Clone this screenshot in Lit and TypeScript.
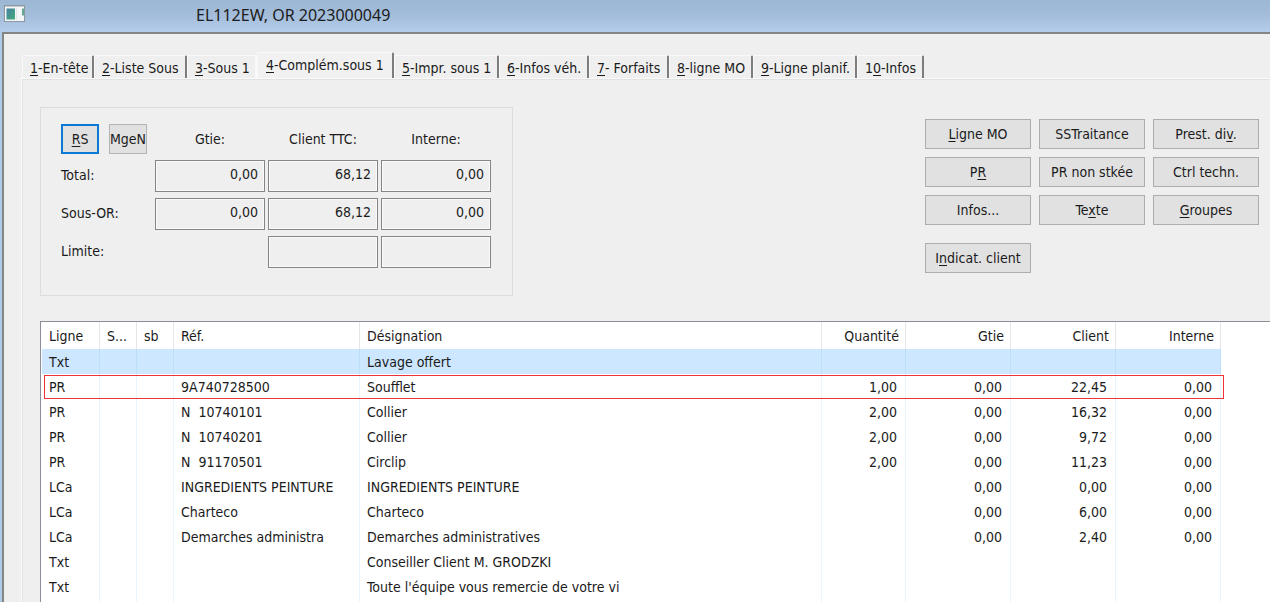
import { LitElement, html, css, nothing } from "lit";
import { customElement, state } from "lit/decorators.js";
import { classMap } from "lit/directives/class-map.js";
import { styleMap } from "lit/directives/style-map.js";

interface Tab {
  text: string;
  key: number;
  width: number;
}

interface Action {
  text: string;
  key?: number;
}

const TABS: Tab[] = [
  { text: "1-En-tête", key: 0, width: 72 },
  { text: "2-Liste Sous", key: 0, width: 93 },
  { text: "3-Sous 1", key: 0, width: 70 },
  { text: "4-Complém.sous 1", key: 0, width: 137 },
  { text: "5-Impr. sous 1", key: 0, width: 105 },
  { text: "6-Infos véh.", key: 0, width: 90 },
  { text: "7- Forfaits", key: 0, width: 80 },
  { text: "8-ligne MO", key: 0, width: 84 },
  { text: "9-Ligne planif.", key: 0, width: 104 },
  { text: "10-Infos", key: 1, width: 67 },
];

const ACTIONS: Action[] = [
  { text: "Ligne MO", key: 0 },
  { text: "SSTraitance" },
  { text: "Prest. div.", key: 9 },
  { text: "PR", key: 1 },
  { text: "PR non stkée" },
  { text: "Ctrl techn." },
  { text: "Infos..." },
  { text: "Texte", key: 2 },
  { text: "Groupes", key: 0 },
];

const AMOUNT_COLUMNS = ["Gtie:", "Client TTC:", "Interne:"];

const TOTALS: { label: string; values: (string | null)[] }[] = [
  { label: "Total:", values: ["0,00", "68,12", "0,00"] },
  { label: "Sous-OR:", values: ["0,00", "68,12", "0,00"] },
  { label: "Limite:", values: [null, "", ""] },
];

const COLUMNS = ["Ligne", "S...", "sb", "Réf.", "Désignation", "Quantité", "Gtie", "Client", "Interne"];

const ROWS: string[][] = [
  ["Txt", "", "", "", "Lavage offert", "", "", "", ""],
  ["PR", "", "", "9A740728500", "Soufflet", "1,00", "0,00", "22,45", "0,00"],
  ["PR", "", "", "N  10740101", "Collier", "2,00", "0,00", "16,32", "0,00"],
  ["PR", "", "", "N  10740201", "Collier", "2,00", "0,00", "9,72", "0,00"],
  ["PR", "", "", "N  91170501", "Circlip", "2,00", "0,00", "11,23", "0,00"],
  ["LCa", "", "", "INGREDIENTS PEINTURE", "INGREDIENTS PEINTURE", "", "0,00", "0,00", "0,00"],
  ["LCa", "", "", "Charteco", "Charteco", "", "0,00", "6,00", "0,00"],
  ["LCa", "", "", "Demarches administra", "Demarches administratives", "", "0,00", "2,40", "0,00"],
  ["Txt", "", "", "", "Conseiller Client M. GRODZKI", "", "", "", ""],
  ["Txt", "", "", "", "Toute l'équipe vous remercie de votre vi", "", "", "", ""],
];

/** Underlines the keyboard accelerator of a caption. */
const caption = (text: string, key?: number) =>
  key === undefined
    ? html`${text}`
    : html`${text.slice(0, key)}<span class="key">${text[key]}</span>${text.slice(key + 1)}`;

@customElement("app-root")
export class AppRoot extends LitElement {
  @state() private activeTab = 3;
  @state() private selectedRow = 0;

  static styles = css`
    :host {
      display: flex;
      flex-direction: column;
      height: 100vh;
      overflow: hidden;
      background: #efefef;
      color: #1b1b1b;
      font: 14px/18px "DejaVu Sans Condensed", "Noto Sans", sans-serif;
    }
    *, *::before, *::after { box-sizing: border-box; }
    button, input { font: inherit; color: inherit; margin: 0; border-radius: 0; }
    .key { text-decoration: underline; text-underline-offset: 2px; text-decoration-thickness: 1px; }

    .titlebar {
      flex: none;
      height: 32px;
      padding: 0 4px;
      display: flex;
      align-items: center;
      gap: 171px;
      background: linear-gradient(#9cb7d3, #a3bddb 50%, #b3cdea);
    }
    .titlebar svg { display: block; flex: none; margin-bottom: 5px; }
    .title { margin: 0; font: 16px/28px "Noto Sans", sans-serif; white-space: nowrap; padding-bottom: 2px; }

    .window {
      flex: 1;
      min-height: 0;
      margin-left: 2px;
      border: solid #858585;
      border-width: 2px 0 0 2px;
      padding: 18px 0 0 17px;
      display: flex;
      flex-direction: column;
      box-shadow: -2px 0 #b0cbe9;
    }
    .tabs { display: flex; align-items: flex-end; padding-left: 1px; height: 26px; flex: none; }
    .tab {
      flex: none;
      height: 23px;
      padding: 2px 0 0 7px;
      border: solid #f9f9f9;
      border-width: 1px 2px 0 1px;
      border-right-color: #7d7d7d;
      border-radius: 2px 2px 0 0;
      background: none;
      text-align: left;
      white-space: nowrap;
      line-height: 20px;
    }
    .tab.before { border-right-color: #f9f9f9; }
    .tab.active { height: 26px; padding: 0 0 2px 8px; background: #f1f1f1; }

    .page {
      flex: 1;
      min-height: 0;
      border: solid #fafafa;
      border-width: 1px 0 0 1px;
      box-shadow: inset 1px 1px #e2e2e2;
      padding: 28px 0 0 18px;
      display: flex;
      flex-direction: column;
      gap: 25px;
    }
    .top { display: flex; justify-content: space-between; align-items: flex-start; padding-right: 11px; }

    .totals {
      display: grid;
      grid-template-columns: 91px repeat(3, 110px);
      grid-template-rows: 30px;
      gap: 6px 3px;
      align-items: center;
      margin: 0;
      border: 1px solid #dcdcdc;
      padding: 16px 21px 27px 20px;
    }
    .totals label { padding-bottom: 3px; }
    .pair { display: flex; gap: 10px; }
    .small {
      flex: none;
      width: 38px;
      height: 30px;
      padding: 0;
      display: flex;
      justify-content: center;
      align-items: center;
      overflow: hidden;
      background: #e1e1e1;
      border: 1px solid #b4b4b4;
    }
    .small.default { border: 2px solid #0b78d6; }
    .head { text-align: center; }
    .amount {
      width: 100%;
      height: 32px;
      padding: 0 6px 5px;
      text-align: right;
      background: #efefef;
      border: 1px solid #858585;
      box-shadow: inset 0 0 0 1px #fafafa;
      outline: none;
    }

    .actions { display: grid; grid-template-columns: repeat(3, 106px); gap: 8px; padding-top: 12px; }
    .action {
      height: 30px;
      padding: 0;
      background: #e1e1e1;
      border: 1px solid #adadad;
      text-align: center;
      white-space: nowrap;
    }
    .action.apart { margin-top: 10px; }

    .list {
      flex: 1;
      min-height: 0;
      overflow: hidden;
      background: #fff;
      border: solid #8b8e96;
      border-width: 1px 0 0 1px;
      padding: 0 49px 0 1px;
    }
    table { width: 100%; table-layout: fixed; border-collapse: separate; border-spacing: 0; }
    .c-line { width: 58px; }
    .c-flag { width: 37px; }
    .c-ref { width: 186px; }
    .c-qty { width: 84px; }
    .c-sum { width: 105px; }
    th, td {
      height: 25px;
      padding: 0 0 0 7px;
      border-right: 1px solid #eaf4fc;
      text-align: left;
      font-weight: 400;
      white-space: pre;
    }
    th { height: 27px; padding-top: 1px; border-right-color: #e6e6e6; }
    th.num { text-align: right; padding-right: 6px; }
    td.num { text-align: right; padding-right: 8px; }
    .selected td { background: #cce7ff; border-right-color: #bcdefa; }
    .marked { position: relative; }
    .marked td:first-child::after {
      content: "";
      position: absolute;
      inset: 1px -3px 0 2px;
      border: 1px solid #ee3338;
      pointer-events: none;
    }
  `;

  private renderTotals() {
    return html`
      <section class="totals" aria-label="Totaux">
        <div class="pair">
          <button class="small default"><span>${caption("RS", 0)}</span></button>
          <button class="small"><span>MgeN</span></button>
        </div>
        ${AMOUNT_COLUMNS.map((name) => html`<span class="head">${name}</span>`)}
        ${TOTALS.map(
          (row, r) => html`
            <label for="amount-${r}-1">${row.label}</label>
            ${row.values.map((value, c) =>
              value === null
                ? html`<span></span>`
                : html`<input class="amount" id="amount-${r}-${c}" readonly
                    aria-label="${row.label} ${AMOUNT_COLUMNS[c]}" .value=${value} />`
            )}
          `
        )}
      </section>
    `;
  }

  private renderList() {
    return html`
      <div class="list">
        <table>
          <colgroup>
            <col class="c-line" /><col class="c-flag" /><col class="c-flag" /><col class="c-ref" /><col />
            <col class="c-qty" /><col class="c-sum" /><col class="c-sum" /><col class="c-sum" />
          </colgroup>
          <thead>
            <tr>${COLUMNS.map((name, c) => html`<th scope="col" class=${c > 4 ? "num" : nothing}>${name}</th>`)}</tr>
          </thead>
          <tbody>
            ${ROWS.map(
              (row, r) => html`
                <tr class=${classMap({ selected: r === this.selectedRow, marked: r === 1 })}
                  @click=${() => (this.selectedRow = r)}>
                  ${row.map((cell, c) => html`<td class=${c > 4 ? "num" : nothing}>${cell}</td>`)}
                </tr>
              `
            )}
            <tr aria-hidden="true">${COLUMNS.map(() => html`<td></td>`)}</tr>
          </tbody>
        </table>
      </div>
    `;
  }

  render() {
    return html`
      <header class="titlebar">
        <svg width="21" height="17" viewBox="0 0 21 17" aria-hidden="true">
          <defs>
            <linearGradient id="screen" x1="0" y1="0" x2="1" y2="1">
              <stop offset="0" stop-color="#4580a4" />
              <stop offset="1" stop-color="#45ac78" />
            </linearGradient>
          </defs>
          <rect x=".5" y=".5" width="20" height="16" fill="#f4f6f7" stroke="#8d979f" />
          <path d="M1 1.500h19" stroke="#c5ccd1" />
          <rect x="2.500" y="3.500" width="8.500" height="11" fill="url(#screen)" />
          <path d="M12.500 3v12" stroke="#e2e6e8" />
          <rect x="18" y="3.500" width="2" height="7" fill="#62a894" />
        </svg>
        <h1 class="title">EL112EW, OR 2023000049</h1>
      </header>
      <main class="window">
        <div class="tabs" role="tablist">
          ${TABS.map(
            (tab, i) => html`<button role="tab" aria-selected=${i === this.activeTab ? "true" : "false"}
              class=${classMap({ tab: true, active: i === this.activeTab, before: i === this.activeTab - 1 })}
              style=${styleMap({ width: `${tab.width}px` })}
              @click=${() => (this.activeTab = i)}>${caption(tab.text, tab.key)}</button>`
          )}
        </div>
        <div class="page" role="tabpanel">
          <div class="top">
            ${this.renderTotals()}
            <div class="actions">
              ${ACTIONS.map((a) => html`<button class="action">${caption(a.text, a.key)}</button>`)}
              <button class="action apart">${caption("Indicat. client", 1)}</button>
            </div>
          </div>
          ${this.renderList()}
        </div>
      </main>
    `;
  }
}
